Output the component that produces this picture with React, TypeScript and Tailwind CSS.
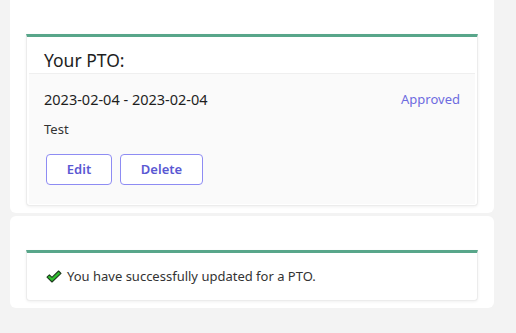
import React from 'react'

const font = { fontFamily: '"Noto Sans", "Open Sans", sans-serif' }

const CheckMark = () => (
  <svg width="16" height="13" viewBox="0 0 16 13" className="shrink-0">
    <path
      d="M1 7.2 L3.4 4.9 L6 7.4 L12.6 1 L15 3.3 L6 12 Z"
      fill="#2fc12f"
      stroke="#1d3a1d"
      strokeWidth="1.1"
      strokeLinejoin="round"
    />
  </svg>
)

const PtoCard: React.FC = () => (
  <div className="border border-[#ececec] border-t-[3px] border-t-[#58a68a] bg-white shadow-[0_1px_3px_rgba(0,0,0,0.06)] rounded-b">
    <div className="pl-[17px] pt-[11px] pb-[1px] text-[17.5px] leading-6 text-[#1e1e1e]">Your PTO:</div>
    <div className="bg-[#fafafa] border-t border-[#efefef] mx-[2px] mb-[1px] pl-[15px] pr-[15px] pt-[15px] pb-[19px]">
      <div className="flex items-center justify-between">
        <span className="text-[14.5px] text-[#1e1e1e]">2023-02-04 - 2023-02-04</span>
        <span className="text-[13px] text-[#6d6be0]">Approved</span>
      </div>
      <div className="mt-[9px] text-[13px] text-[#333]">Test</div>
      <div className="mt-[15px] flex gap-2 pl-[2px]">
        <button className="w-[66px] h-[31px] rounded border border-[#8e8cf3] bg-white text-[13px] font-semibold text-[#5a58d3]">
          Edit
        </button>
        <button className="w-[83px] h-[31px] rounded border border-[#8e8cf3] bg-white text-[13px] font-semibold text-[#5a58d3]">
          Delete
        </button>
      </div>
    </div>
  </div>
)

export default function App() {
  return (
    <div className="min-h-[333px] bg-[#f3f3f3] pl-[10px] pr-[22px]" style={font}>
      <div className="bg-white rounded-b-md px-[16px] pt-[34px] pb-[7px]">
        <PtoCard />
      </div>
      <div className="mt-[3px] bg-white rounded-md px-[16px] pt-[34px] pb-[7px]">
        <div className="border border-[#ececec] border-t-[3px] border-t-[#58a68a] bg-white shadow-[0_1px_3px_rgba(0,0,0,0.06)] rounded-b">
          <div className="flex items-center gap-[5px] pl-[19px] h-[47px]">
            <CheckMark />
            <span className="text-[13px] text-[#333]">You have successfully updated for a PTO.</span>
          </div>
        </div>
      </div>
    </div>
  )
}
